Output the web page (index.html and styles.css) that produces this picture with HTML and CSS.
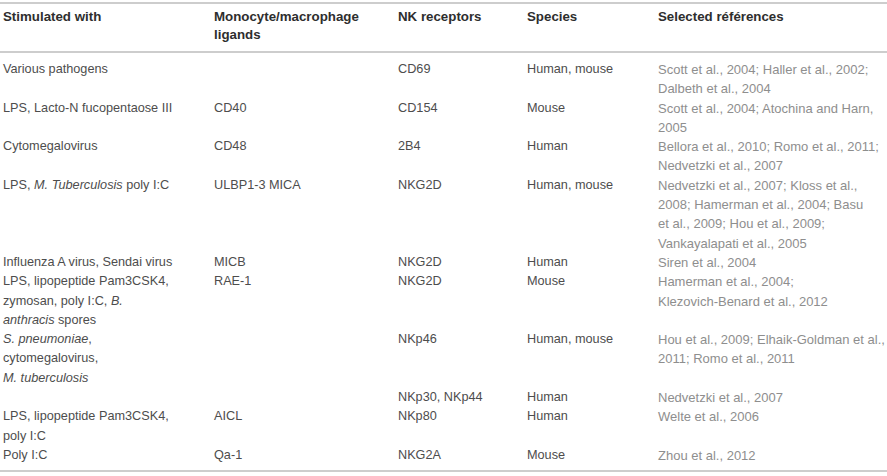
FILE: index.html
```html
<!DOCTYPE html>
<html>
<head>
<meta charset="utf-8">
<link rel="stylesheet" href="styles.css">
</head>
<body>
<table class="tbl">
  <colgroup>
    <col class="c1"><col class="c2"><col class="c3"><col class="c4"><col class="c5">
  </colgroup>
  <thead>
    <tr>
      <th>Stimulated with</th>
      <th>Monocyte/macrophage<br>ligands</th>
      <th>NK receptors</th>
      <th>Species</th>
      <th>Selected références</th>
    </tr>
  </thead>
  <tbody>
    <tr class="first">
      <td>Various pathogens</td>
      <td></td>
      <td>CD69</td>
      <td>Human, mouse</td>
      <td class="ref">Scott et al., 2004; Haller et al., 2002;<br>Dalbeth et al., 2004</td>
    </tr>
    <tr>
      <td>LPS, Lacto-N fucopentaose III</td>
      <td>CD40</td>
      <td>CD154</td>
      <td>Mouse</td>
      <td class="ref">Scott et al., 2004; Atochina and Harn,<br>2005</td>
    </tr>
    <tr>
      <td>Cytomegalovirus</td>
      <td>CD48</td>
      <td>2B4</td>
      <td>Human</td>
      <td class="ref">Bellora et al., 2010; Romo et al., 2011;<br>Nedvetzki et al., 2007</td>
    </tr>
    <tr>
      <td>LPS, <i>M. Tuberculosis</i> poly I:C</td>
      <td>ULBP1-3 MICA</td>
      <td>NKG2D</td>
      <td>Human, mouse</td>
      <td class="ref">Nedvetzki et al., 2007; Kloss et al.,<br>2008; Hamerman et al., 2004; Basu<br>et al., 2009; Hou et al., 2009;<br>Vankayalapati et al., 2005</td>
    </tr>
    <tr>
      <td>Influenza A virus, Sendai virus</td>
      <td>MICB</td>
      <td>NKG2D</td>
      <td>Human</td>
      <td class="ref">Siren et al., 2004</td>
    </tr>
    <tr>
      <td>LPS, lipopeptide Pam3CSK4,<br>zymosan, poly I:C, <i>B.</i><br><i>anthracis</i> spores</td>
      <td>RAE-1</td>
      <td>NKG2D</td>
      <td>Mouse</td>
      <td class="ref">Hamerman et al., 2004;<br>Klezovich-Benard et al., 2012</td>
    </tr>
    <tr>
      <td><i>S. pneumoniae</i>,<br>cytomegalovirus,<br><i>M. tuberculosis</i></td>
      <td></td>
      <td>NKp46</td>
      <td>Human, mouse</td>
      <td class="ref">Hou et al., 2009; Elhaik-Goldman et al.,<br>2011; Romo et al., 2011</td>
    </tr>
    <tr>
      <td></td>
      <td></td>
      <td>NKp30, NKp44</td>
      <td>Human</td>
      <td class="ref">Nedvetzki et al., 2007</td>
    </tr>
    <tr>
      <td>LPS, lipopeptide Pam3CSK4,<br>poly I:C</td>
      <td>AICL</td>
      <td>NKp80</td>
      <td>Human</td>
      <td class="ref">Welte et al., 2006</td>
    </tr>
    <tr class="last">
      <td>Poly I:C</td>
      <td>Qa-1</td>
      <td>NKG2A</td>
      <td>Mouse</td>
      <td class="ref">Zhou et al., 2012</td>
    </tr>
  </tbody>
</table>
</body>
</html>
```

FILE: styles.css
```css
html, body {
  margin: 0;
  padding: 0;
  background: #ffffff;
}

.tbl {
  margin-top: 2px;
  width: 887px;
  border-collapse: collapse;
  table-layout: fixed;
  font-family: "Liberation Sans", Arial, sans-serif;
  color: #4d4d4d;
}

.c1 { width: 211px; }
.c2 { width: 184px; }
.c3 { width: 129px; }
.c4 { width: 131px; }
.c5 { width: 232px; }

.tbl thead tr {
  border-top: 2px solid #cdcdcd;
  border-bottom: 2px solid #cdcdcd;
}

.tbl th {
  text-align: left;
  vertical-align: top;
  font-weight: bold;
  font-size: 13.3px;
  line-height: 18px;
  color: #2e2e2e;
  padding: 4px 0 7px 3px;
  white-space: nowrap;
}

.tbl td {
  text-align: left;
  vertical-align: top;
  font-size: 12.7px;
  line-height: 19.3px;
  padding: 0 0 0 3px;
  white-space: nowrap;
}

.tbl tr.first td { padding-top: 7px; }
.tbl tr.last td { padding-bottom: 5px; }
.tbl tbody tr.last { border-bottom: 2px solid #cdcdcd; }

.tbl td.ref {
  color: #8e8e8e;
  font-size: 13px;
}

.tbl i { font-style: italic; }
```
